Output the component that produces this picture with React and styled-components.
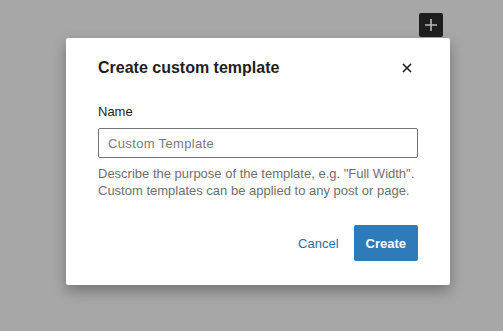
import React, { useState } from 'react';
import styled, { createGlobalStyle } from 'styled-components';

const GlobalStyle = createGlobalStyle`
  html, body {
    margin: 0;
    padding: 0;
    background: #a7a7a7;
    font-family: "Liberation Sans", Arial, sans-serif;
  }
`;

const Backdrop = styled.div`
  position: relative;
  width: 503px;
  height: 331px;
  background: #a7a7a7;
  overflow: hidden;
  padding-top: 38px;
  padding-left: 66px;
  box-sizing: border-box;
`;

const AddButton = styled.button`
  position: absolute;
  top: 13px;
  left: 419px;
  width: 24px;
  height: 24px;
  border: none;
  border-radius: 2px;
  background: #1e1e1e;
  color: #bbb;
  display: flex;
  align-items: center;
  justify-content: center;
  padding: 0;
`;

const Modal = styled.div`
  width: 384px;
  height: 247px;
  background: #fff;
  border-radius: 2px;
  box-shadow: 0 6px 14px rgba(0, 0, 0, 0.3);
  box-sizing: border-box;
  padding: 0 32px;
  display: flex;
  flex-direction: column;
  & > * {
    flex-shrink: 0;
  }
`;

const Header = styled.div`
  height: 60px;
  display: flex;
  align-items: center;
  justify-content: space-between;
`;

const Title = styled.h1`
  margin: 0;
  font-size: 16px;
  font-weight: 700;
  color: #1e1e1e;
`;

const CloseButton = styled.button`
  border: none;
  background: none;
  padding: 0;
  margin-right: 6px;
  display: flex;
  color: #1e1e1e;
`;

const Label = styled.label`
  display: block;
  margin-top: 6px;
  font-size: 13px;
  color: #1e1e1e;
  line-height: 16px;
`;

const Input = styled.input`
  margin-top: 8px;
  width: 100%;
  height: 30px;
  box-sizing: border-box;
  border: 1px solid #757575;
  border-radius: 2px;
  padding: 0 9px;
  font-family: inherit;
  font-size: 13px;
  letter-spacing: 0.35px;
  color: #1e1e1e;
  &::placeholder {
    color: #7a7a7a;
  }
`;

const Help = styled.p`
  margin: 7px 0 0;
  font-size: 13px;
  line-height: 17px;
  white-space: nowrap;
  color: #6f6f6f;
`;

const Actions = styled.div`
  margin-top: 26px;
  display: flex;
  justify-content: flex-end;
  align-items: center;
  gap: 3px;
`;

const Button = styled.button`
  height: 36px;
  border: none;
  border-radius: 2px;
  font-family: inherit;
  font-size: 13px;
  padding: 0 12px;
  cursor: pointer;
  background: ${(p) => (p.primary ? '#2f7ab9' : 'transparent')};
  color: ${(p) => (p.primary ? '#fff' : '#2f6c9f')};
  font-weight: ${(p) => (p.primary ? 600 : 400)};
`;

export default function App() {
  const [name, setName] = useState('');
  return (
    <>
      <GlobalStyle />
      <Backdrop>
        <AddButton>
          <svg width="16" height="16" viewBox="0 0 16 16">
            <path d="M8 2v12M2 8h12" stroke="currentColor" strokeWidth="1.6" />
          </svg>
        </AddButton>
        <Modal>
          <Header>
            <Title>Create custom template</Title>
            <CloseButton>
              <svg width="10" height="10" viewBox="0 0 10 10">
                <path d="M1 1l8 8M9 1l-8 8" stroke="currentColor" strokeWidth="1.6" />
              </svg>
            </CloseButton>
          </Header>
          <Label>Name</Label>
          <Input placeholder="Custom Template" value={name} onChange={(e) => setName(e.target.value)} />
          <Help>
            Describe the purpose of the template, e.g. "Full Width".
            <br />
            Custom templates can be applied to any post or page.
          </Help>
          <Actions>
            <Button>Cancel</Button>
            <Button primary>Create</Button>
          </Actions>
        </Modal>
      </Backdrop>
    </>
  );
}
